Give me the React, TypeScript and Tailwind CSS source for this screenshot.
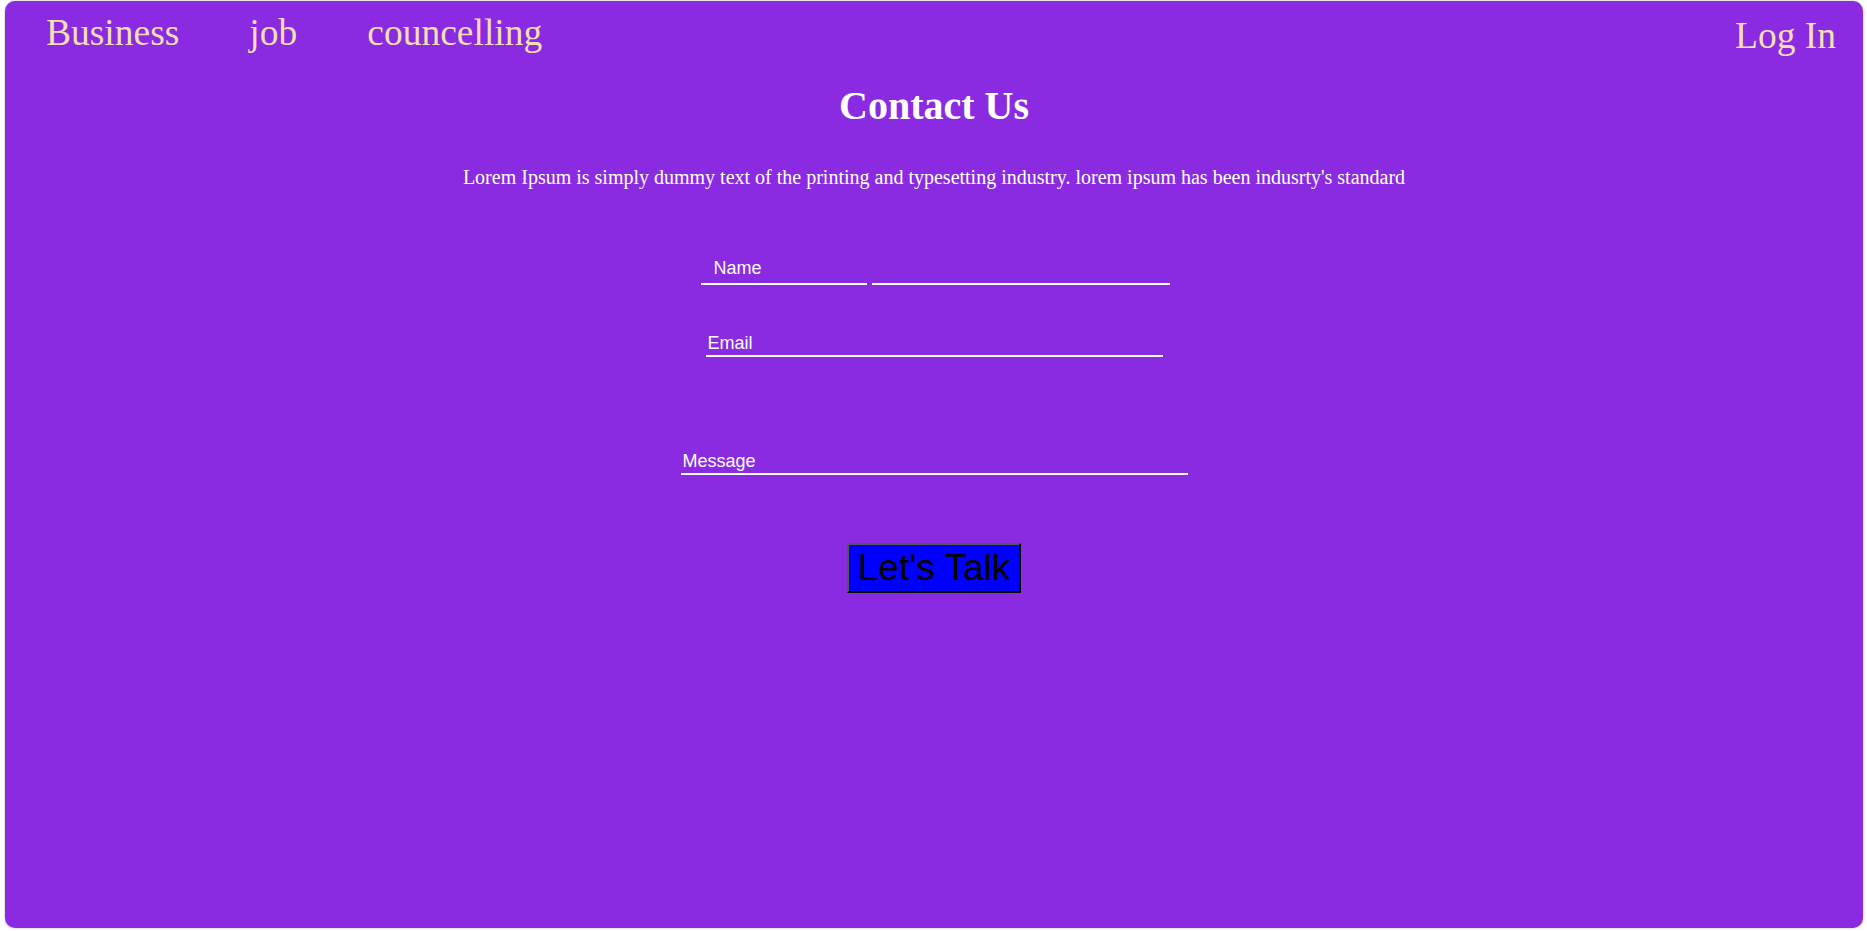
import React from "react";

export default function App() {
  return (
    <div className="w-[1867px] h-[931px] bg-white pt-[1px] pl-[5px] pr-[4px] pb-[3px]">
      <div className="h-full rounded-[10px] bg-[#8a2be2] shadow-[0_0_2px_rgba(0,0,0,0.35)] flex flex-col items-center [font-family:'Liberation_Serif',serif]">
        <nav className="w-full flex items-start justify-between pl-[41px] pr-[27px] pt-[10px] text-[37.5px] leading-[1.15] text-[#f5deb3]">
          <div className="flex gap-[70px]">
            <span>Business</span>
            <span>job</span>
            <span>councelling</span>
          </div>
          <span className="mt-[3px]">Log In</span>
        </nav>
        <h1 className="mt-[26px] text-[40px] font-bold leading-[1.15] text-white">Contact Us</h1>
        <p className="mt-[37px] text-[20px] leading-[1.15] text-white">
          Lorem Ipsum is simply dummy text of the printing and typesetting industry. lorem ipsum has been indusrty's standard
        </p>
        <form className="flex flex-col items-center [font-family:'Liberation_Sans',Arial,sans-serif] text-[18px] text-white">
          <div className="mt-[69px] flex items-end gap-[5px] ml-[2px]">
            <label className="w-[166px] pl-[13px] border-b-2 border-white leading-[1.15] pb-[4px]">Name</label>
            <input className="w-[298px] h-[25px] bg-transparent border-b-2 border-white outline-none px-[2px] text-white" />
          </div>
          <input
            placeholder="Email"
            className="mt-[47px] w-[457px] h-[25px] bg-transparent border-b-2 border-white outline-none px-[2px] text-white placeholder:text-white"
          />
          <input
            placeholder="Message"
            className="mt-[93px] w-[507px] h-[25px] bg-transparent border-b-2 border-white outline-none px-[2px] text-white placeholder:text-white"
          />
          <button
            type="button"
            className="mt-[68px] h-[50px] px-[9px] bg-[#0000ff] text-black text-[37px] leading-[1.15] border-2 border-t-[#555] border-l-[#555] border-b-black border-r-black"
          >
            Let's Talk
          </button>
        </form>
      </div>
    </div>
  );
}
